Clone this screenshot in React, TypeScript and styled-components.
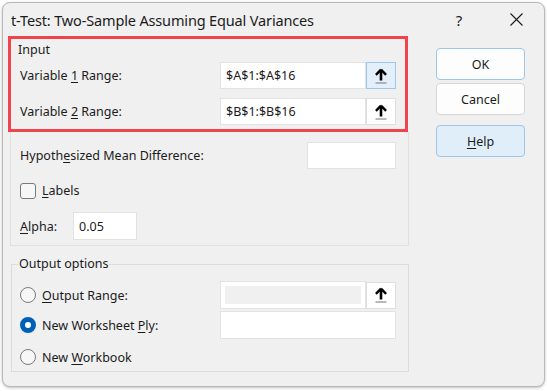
import React from 'react';
import styled, { createGlobalStyle } from 'styled-components';

const GlobalStyle = createGlobalStyle`
    html, body {
        margin: 0;
        padding: 0;
        background: #ffffff;
    }
    body {
        font-family: "Noto Sans", "Open Sans", sans-serif;
        color: #1b1b1b;
    }
`;

const Page = styled.div`
    width: 547px;
    height: 391px;
    padding: 2px 0 0 2px;
    box-sizing: border-box;
    overflow: hidden;
`;

const Window = styled.div`
    width: 543px;
    height: 385px;
    box-sizing: border-box;
    background: #f0f0f0;
    border: 1px solid #b9b9b9;
    border-radius: 8px;
    box-shadow: 0 1px 3px rgba(0, 0, 0, 0.25);
    display: flex;
    flex-direction: column;
`;

const TitleBar = styled.div`
    height: 33px;
    display: flex;
    align-items: center;
    padding-left: 8px;
`;

const Title = styled.span`
    font-size: 14.5px;
    flex: 1;
    letter-spacing: -0.15px;
`;

const TitleHelp = styled.span`
    width: 20px;
    font-size: 15px;
    text-align: center;
    margin-right: 41px;
`;

const CloseIcon = styled.svg`
    width: 13px;
    height: 13px;
    margin-right: 21px;
`;

const Body = styled.div`
    display: flex;
    padding-left: 5px;
`;

const LeftColumn = styled.div`
    width: 401px;
    display: flex;
    flex-direction: column;
`;

const Highlight = styled.div`
    width: 400px;
    height: 96px;
    box-sizing: border-box;
    border: 3px solid #f0444c;
    padding: 3px 0 0 7px;
    display: flex;
    flex-direction: column;
`;

const GroupTitle = styled.div`
    font-size: 12.5px;
    line-height: 16px;
    margin-bottom: 4px;
`;

const RangeRow = styled.div<{ $gap?: number }>`
    display: flex;
    align-items: center;
    height: 27px;
    margin-top: ${p => p.$gap ?? 0}px;
    padding-left: 2px;
`;

const Label = styled.span<{ $width?: number }>`
    font-size: 12.5px;
    width: ${p => (p.$width ? `${p.$width}px` : 'auto')};
    flex-shrink: 0;
`;

const Key = styled.span`
    text-decoration: underline;
    text-underline-offset: 2px;
`;

const Field = styled.div<{ $width: number; $height?: number; $disabled?: boolean }>`
    width: ${p => p.$width}px;
    height: ${p => p.$height ?? 27}px;
    box-sizing: border-box;
    background: #ffffff;
    border: 1px solid #e2e2e2;
    font-size: 12.5px;
    display: flex;
    align-items: center;
    padding: ${p => (p.$disabled ? '4px' : '0 5px')};
    flex-shrink: 0;
`;

const DisabledFill = styled.div`
    width: 100%;
    height: 100%;
    background: #f0f0f0;
`;

const PickButton = styled.div<{ $focused?: boolean }>`
    width: 30px;
    height: 27px;
    box-sizing: border-box;
    background: ${p => (p.$focused ? '#e3effa' : '#ffffff')};
    border: 1px solid ${p => (p.$focused ? '#9cc6ea' : '#dedede')};
    display: flex;
    align-items: center;
    justify-content: center;
    flex-shrink: 0;
`;

const Rest = styled.div`
    margin-left: 2px;
    width: 399px;
    box-sizing: border-box;
    border: 1px solid #e0e0e0;
    border-top: none;
    padding: 10px 12px 5px 9px;
    display: flex;
    flex-direction: column;
`;

const OptionRow = styled.div<{ $gap?: number; $height?: number }>`
    display: flex;
    align-items: center;
    height: ${p => p.$height ?? 27}px;
    margin-top: ${p => p.$gap ?? 0}px;
`;

const Spacer = styled.div`
    flex: 1;
`;

const Checkbox = styled.span`
    width: 16px;
    height: 16px;
    box-sizing: border-box;
    border: 1px solid #7a7a7a;
    border-radius: 3px;
    background: #f7f7f7;
    margin-right: 6px;
    flex-shrink: 0;
`;

const Radio = styled.span<{ $checked?: boolean }>`
    width: 16px;
    height: 16px;
    box-sizing: border-box;
    border-radius: 50%;
    border: ${p => (p.$checked ? '5px solid #005fb8' : '1px solid #7a7a7a')};
    background: ${p => (p.$checked ? '#ffffff' : '#f7f7f7')};
    margin-right: 6px;
    flex-shrink: 0;
`;

const OutputGroup = styled.fieldset`
    margin: 10px 0 0 3px;
    width: 398px;
    height: 116px;
    box-sizing: border-box;
    border: 1px solid #dcdcdc;
    padding: 9px 12px 0 8px;
    display: flex;
    flex-direction: column;
`;

const Legend = styled.legend`
    font-size: 12.5px;
    line-height: 16px;
    padding: 0 1px;
    margin-left: -2px;
`;

const RightColumn = styled.div`
    margin-left: 27px;
    padding-top: 12px;
    display: flex;
    flex-direction: column;
`;

const DialogButton = styled.div<{ $variant?: 'default' | 'plain' | 'hover'; $gap?: number }>`
    width: 89px;
    height: 32px;
    box-sizing: border-box;
    margin-top: ${p => p.$gap ?? 0}px;
    border-radius: 4px;
    font-size: 12.5px;
    display: flex;
    align-items: center;
    justify-content: center;
    background: ${p => (p.$variant === 'hover' ? '#e0eef9' : '#fdfdfd')};
    border: 1px solid ${p => (p.$variant === 'plain' ? '#d6d6d6' : '#9cc6ea')};
`;

const ArrowIcon = () => (
    <svg width="14" height="16" viewBox="0 0 14 16">
        <path d="M7 1.6 L1.9 6.8 M7 1.6 L12.1 6.8" stroke="#000" strokeWidth="2.4" fill="none" />
        <path d="M7 2.5 V12.5" stroke="#000" strokeWidth="2.6" />
        <path d="M1.5 15 H12.5" stroke="#8a8a8a" strokeWidth="1.2" />
    </svg>
);

const App = () => {
    return (
        <>
            <GlobalStyle />
            <Page>
                <Window>
                    <TitleBar>
                        <Title>t-Test: Two-Sample Assuming Equal Variances</Title>
                        <TitleHelp>?</TitleHelp>
                        <CloseIcon viewBox="0 0 13 13">
                            <path d="M0.5 0.5 L12.5 12.5 M12.5 0.5 L0.5 12.5" stroke="#1b1b1b" strokeWidth="1.1" />
                        </CloseIcon>
                    </TitleBar>
                    <Body>
                        <LeftColumn>
                            <Highlight>
                                <GroupTitle>Input</GroupTitle>
                                <RangeRow>
                                    <Label $width={200}>Variable <Key>1</Key> Range:</Label>
                                    <Field $width={146}>$A$1:$A$16</Field>
                                    <PickButton $focused><ArrowIcon /></PickButton>
                                </RangeRow>
                                <RangeRow $gap={9}>
                                    <Label $width={200}>Variable <Key>2</Key> Range:</Label>
                                    <Field $width={146}>$B$1:$B$16</Field>
                                    <PickButton><ArrowIcon /></PickButton>
                                </RangeRow>
                            </Highlight>
                            <Rest>
                                <OptionRow>
                                    <Label>Hypoth<Key>e</Key>sized Mean Difference:</Label>
                                    <Spacer />
                                    <Field $width={89} />
                                </OptionRow>
                                <OptionRow $gap={8}>
                                    <Checkbox />
                                    <Label><Key>L</Key>abels</Label>
                                </OptionRow>
                                <OptionRow $gap={8} $height={28}>
                                    <Label $width={53}><Key>A</Key>lpha:</Label>
                                    <Field $width={64} $height={28}>0.05</Field>
                                </OptionRow>
                            </Rest>
                            <OutputGroup>
                                <Legend>Output options</Legend>
                                <OptionRow $height={28}>
                                    <Radio />
                                    <Label $width={178}><Key>O</Key>utput Range:</Label>
                                    <Field $width={146} $height={28} $disabled><DisabledFill /></Field>
                                    <PickButton><ArrowIcon /></PickButton>
                                </OptionRow>
                                <OptionRow $gap={2} $height={28}>
                                    <Radio $checked />
                                    <Label $width={178}>New Worksheet <Key>P</Key>ly:</Label>
                                    <Field $width={176} $height={28} />
                                </OptionRow>
                                <OptionRow $gap={4} $height={28}>
                                    <Radio />
                                    <Label>New <Key>W</Key>orkbook</Label>
                                </OptionRow>
                            </OutputGroup>
                        </LeftColumn>
                        <RightColumn>
                            <DialogButton>OK</DialogButton>
                            <DialogButton $variant="plain" $gap={3}>Cancel</DialogButton>
                            <DialogButton $variant="hover" $gap={10}><Key>H</Key>elp</DialogButton>
                        </RightColumn>
                    </Body>
                </Window>
            </Page>
        </>
    );
};

export default App;
